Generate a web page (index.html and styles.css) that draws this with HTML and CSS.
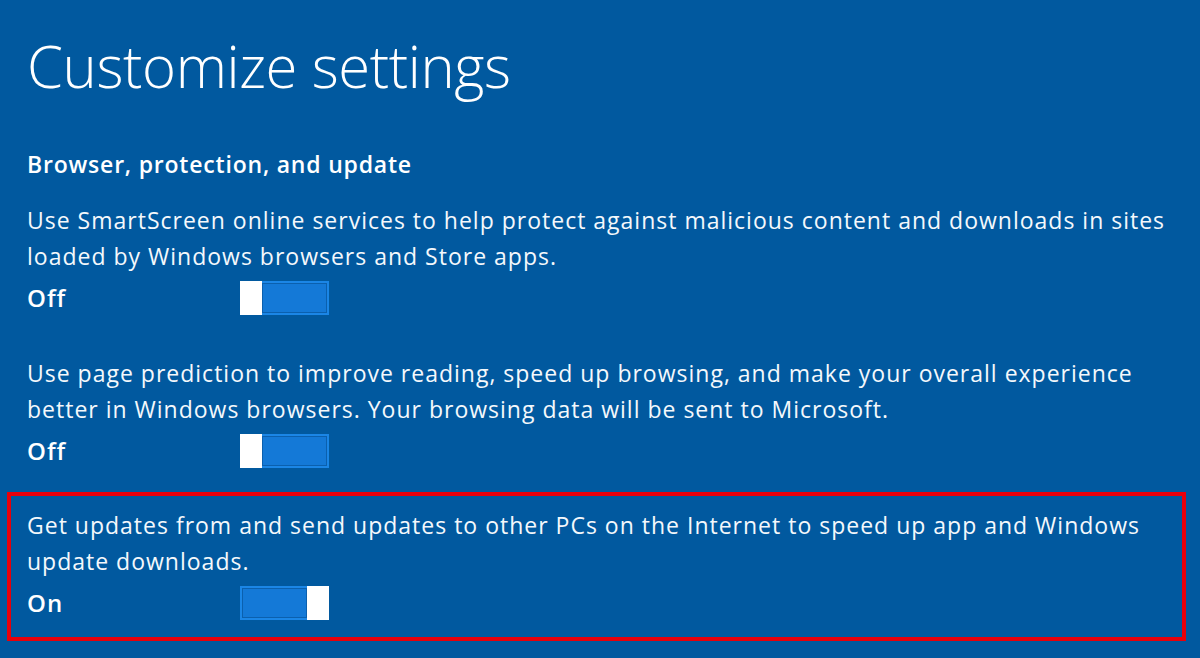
FILE: index.html
```html
<!DOCTYPE html>
<html lang="en">
<head>
<meta charset="utf-8">
<title>Customize settings</title>
<link rel="stylesheet" href="styles.css">
</head>
<body>
<main class="page">
  <h1 class="title">Customize settings</h1>
  <h2 class="section">Browser, protection, and update</h2>

  <section class="setting">
    <p class="desc">Use SmartScreen online services to help protect against malicious content and downloads in sites loaded by Windows browsers and Store apps.</p>
    <div class="row">
      <span class="state">Off</span>
      <div class="toggle off"><span class="thumb"></span><span class="track"></span></div>
    </div>
  </section>

  <section class="setting">
    <p class="desc">Use page prediction to improve reading, speed up browsing, and make your overall experience better in Windows browsers. Your browsing data will be sent to Microsoft.</p>
    <div class="row">
      <span class="state">Off</span>
      <div class="toggle off"><span class="thumb"></span><span class="track"></span></div>
    </div>
  </section>

  <section class="setting highlight">
    <p class="desc">Get updates from and send updates to other PCs on the Internet to speed up app and Windows update downloads.</p>
    <div class="row">
      <span class="state">On</span>
      <div class="toggle on"><span class="track"></span><span class="thumb"></span></div>
    </div>
  </section>
</main>
</body>
</html>
```

FILE: styles.css
```css
html, body {
  margin: 0;
  padding: 0;
  background: #01599f;
  height: 100%;
  overflow: hidden;
}

.page {
  padding: 0 14px 0 27px;
  color: #ffffff;
  font-family: "Open Sans", "Noto Sans", "Liberation Sans", sans-serif;
}

.title {
  margin: 0;
  padding-top: 24px;
  font-weight: 300;
  font-size: 58px;
  line-height: 84px;
  letter-spacing: -0.4px;
}

.section {
  margin: 41px 0 0 0;
  font-size: 23px;
  font-weight: 600;
  line-height: 30px;
  letter-spacing: 0.8px;
}

.setting {
  margin-top: 40px;
}

.section + .setting {
  margin-top: 23px;
}

.desc {
  margin: 0;
  font-size: 23px;
  line-height: 36px;
  letter-spacing: 1px;
  max-width: 1155px;
  color: #f4f8fc;
}

.row {
  display: flex;
  align-items: center;
  margin-top: 7px;
  height: 34px;
}

.state {
  width: 213px;
  font-size: 24px;
  font-weight: 600;
  line-height: 34px;
  letter-spacing: 1px;
}

.toggle {
  display: flex;
  width: 89px;
  height: 34px;
}

.thumb {
  width: 22px;
  background: #ffffff;
}

.track {
  flex: 1;
  background: #1479d7;
  border: 2px solid #1b86e6;
  box-shadow: inset 0 0 0 1px #0b60ae;
}

.off .track { border-left: none; }
.on .track { border-right: none; }

.highlight {
  margin: 24px 0 0 -20px;
  border: 4px solid #e8000b;
  padding: 11px 16px 17px 16px;
}
```
